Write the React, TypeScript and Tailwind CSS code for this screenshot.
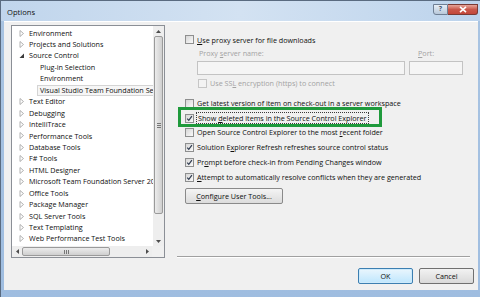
import React from 'react';

const treeItems: { label: string; level: 0 | 1; state?: 'open' | 'closed' | 'leaf'; selected?: boolean }[] = [
  { label: 'Environment', level: 0, state: 'closed' },
  { label: 'Projects and Solutions', level: 0, state: 'closed' },
  { label: 'Source Control', level: 0, state: 'open' },
  { label: 'Plug-in Selection', level: 1, state: 'leaf' },
  { label: 'Environment', level: 1, state: 'leaf' },
  { label: 'Visual Studio Team Foundation Server', level: 1, state: 'leaf', selected: true },
  { label: 'Text Editor', level: 0, state: 'closed' },
  { label: 'Debugging', level: 0, state: 'closed' },
  { label: 'IntelliTrace', level: 0, state: 'closed' },
  { label: 'Performance Tools', level: 0, state: 'closed' },
  { label: 'Database Tools', level: 0, state: 'closed' },
  { label: 'F# Tools', level: 0, state: 'closed' },
  { label: 'HTML Designer', level: 0, state: 'closed' },
  { label: 'Microsoft Team Foundation Server 2010 Power Tools', level: 0, state: 'closed' },
  { label: 'Office Tools', level: 0, state: 'closed' },
  { label: 'Package Manager', level: 0, state: 'closed' },
  { label: 'SQL Server Tools', level: 0, state: 'closed' },
  { label: 'Text Templating', level: 0, state: 'closed' },
  { label: 'Web Performance Test Tools', level: 0, state: 'closed' },
];

const Checkbox = ({ checked, disabled }: { checked?: boolean; disabled?: boolean }) => (
  <span
    className={
      disabled
        ? 'flex h-[9px] w-[9px] shrink-0 items-center justify-center border border-[#c6c6c6] bg-[#f3f3f3]'
        : 'flex h-[9px] w-[9px] shrink-0 items-center justify-center border border-[#8e8f8f] bg-gradient-to-br from-[#d6d6d6] to-[#fafafa]'
    }
  >
    {checked && (
      <svg width="7" height="7" viewBox="0 0 7 7">
        <path d="M1.2 3.6 L2.8 5.3 L5.9 1.2" fill="none" stroke="#2f3b4f" strokeWidth="1.2" />
      </svg>
    )}
  </span>
);

const Arrow = ({ state }: { state?: string }) => {
  if (state === 'open')
    return (
      <svg width="6" height="6" viewBox="0 0 6 6" className="shrink-0">
        <polygon points="5,0.5 5,5 0.5,5" fill="#3a3a3a" />
      </svg>
    );
  if (state === 'closed')
    return (
      <svg width="6" height="7" viewBox="0 0 6 7" className="shrink-0">
        <polygon points="1,0.5 4.5,3.5 1,6.5" fill="#fff" stroke="#a9a9a9" strokeWidth="0.9" />
      </svg>
    );
  return <span className="w-[6px] shrink-0" />;
};

const CheckRow = ({
  checked,
  children,
}: {
  checked?: boolean;
  children: React.ReactNode;
}) => (
  <div className="flex h-[14.75px] items-center gap-[3px] pl-[8px] whitespace-nowrap">
    <Checkbox checked={checked} />
    <span>{children}</span>
  </div>
);

const Tree = () => (
  <div className="relative flex h-[233px] w-[154px] shrink-0 flex-col border border-[#8b8f96] bg-white">
    <div className="flex flex-1 overflow-hidden">
      <div className="flex-1 overflow-hidden pt-[1.3px]">
        {treeItems.map((item, i) => (
          <div
            key={i}
            className="flex h-[11.45px] items-center whitespace-nowrap"
            style={{ paddingLeft: item.level === 0 ? 7 : 24 }}
          >
            {item.level === 0 && <Arrow state={item.state} />}
            <span
              className={
                item.selected
                  ? 'ml-[1px] flex h-[11px] w-[140px] items-center border border-[#d4d4d4] bg-[#f6f6f6] pl-[2px]'
                  : item.level === 0
                    ? 'ml-[3px] pl-[1px]'
                    : 'ml-[1px] pl-[3px]'
              }
            >
              {item.label}
            </span>
          </div>
        ))}
      </div>
      {/* vertical scrollbar */}
      <div className="flex w-[11px] shrink-0 flex-col bg-[#eeeeee]">
        <div className="flex h-[10px] items-center justify-center">
          <svg width="5" height="3" viewBox="0 0 5 3">
            <polygon points="0,3 2.5,0 5,3" fill="#4d4d4d" />
          </svg>
        </div>
        <div className="mx-[1px] flex h-[178px] items-center justify-center rounded-[2px] border border-[#9a9a9a] bg-gradient-to-r from-[#ececec] to-[#cfcfcf]">
          <div className="flex flex-col gap-[1px]">
            <span className="h-px w-[4px] bg-[#777]" />
            <span className="h-px w-[4px] bg-[#777]" />
            <span className="h-px w-[4px] bg-[#777]" />
          </div>
        </div>
        <div className="flex-1" />
        <div className="flex h-[10px] items-center justify-center">
          <svg width="5" height="3" viewBox="0 0 5 3">
            <polygon points="0,0 2.5,3 5,0" fill="#4d4d4d" />
          </svg>
        </div>
      </div>
    </div>
    {/* horizontal scrollbar */}
    <div className="flex h-[11px] shrink-0 bg-[#eeeeee]">
      <div className="flex w-[10px] items-center justify-center">
        <svg width="3" height="5" viewBox="0 0 3 5">
          <polygon points="3,0 0,2.5 3,5" fill="#4d4d4d" />
        </svg>
      </div>
      <div className="my-[1px] flex w-[88px] items-center justify-center rounded-[2px] border border-[#9a9a9a] bg-gradient-to-b from-[#ececec] to-[#cfcfcf]">
        <div className="flex gap-[1px]">
          <span className="h-[4px] w-px bg-[#777]" />
          <span className="h-[4px] w-px bg-[#777]" />
          <span className="h-[4px] w-px bg-[#777]" />
        </div>
      </div>
      <div className="flex-1" />
      <div className="flex w-[10px] items-center justify-center">
        <svg width="3" height="5" viewBox="0 0 3 5">
          <polygon points="0,0 3,2.5 0,5" fill="#4d4d4d" />
        </svg>
      </div>
      <div className="w-[12px] bg-[#f0f0f0]" />
    </div>
  </div>
);

const OptionsPanel = () => (
  <div className="flex flex-1 flex-col">
    <div className="mt-[7.6px]">
      <CheckRow>
        <u>U</u>se proxy server for file downloads
      </CheckRow>
    </div>
    <div className="flex h-[12px] items-center pl-[22px] text-[#a3a3a3]">
      <span className="flex-1">
        Proxy <u>s</u>erver name:
      </span>
      <span className="w-[60px]">
        <u>P</u>ort:
      </span>
    </div>
    <div className="mt-[2px] flex h-[14px] gap-[4px] pl-[20px]">
      <div className="w-[208px] border border-[#c3c3c3] bg-[#f5f5f5]" />
      <div className="w-[54px] border border-[#c3c3c3] bg-[#f5f5f5]" />
    </div>
    <div className="mt-[0.6px] flex h-[14.75px] items-center gap-[3px] pl-[21px] whitespace-nowrap text-[#a3a3a3]">
      <Checkbox disabled />
      <span>
        Use SS<u>L</u> encryption (https) to connect
      </span>
    </div>
    <div className="mt-[5.2px]">
      <CheckRow>
        Get latest version of item on check-out in a server workspace
      </CheckRow>
      <div className="relative">
        <div className="flex h-[14.75px] items-center gap-[2px] pl-[8px] whitespace-nowrap">
          <Checkbox checked />
          <span className="border border-dotted border-[#3a3a3a] px-[1px] leading-[10px]">
            Show <u>d</u>eleted items in the Source Control Explorer
          </span>
        </div>
        <div className="pointer-events-none absolute top-[-3.6px] left-[1px] h-[20px] w-[204px] border-[3px] border-[#1f9a3c]" />
      </div>
      <CheckRow>
        Open Source Control Explorer to the most <u>r</u>ecent folder
      </CheckRow>
      <CheckRow checked>
        Solution E<u>x</u>plorer Refresh refreshes source control status
      </CheckRow>
      <CheckRow checked>
        Pr<u>o</u>mpt before check-in from Pending Changes window
      </CheckRow>
      <CheckRow checked>
        <u>A</u>ttempt to automatically resolve conflicts when they are generated
      </CheckRow>
    </div>
    <button className="mt-[3.6px] ml-[8px] flex h-[16px] w-[98px] items-center justify-center rounded-[2px] border border-[#8a8a8a] bg-gradient-to-b from-[#f4f4f4] to-[#dcdcdc]">
      <span>
        <u>C</u>onfigure User Tools...
      </span>
    </button>
    <div className="mt-auto mr-[8px] mb-[1px] h-[2px] border-t border-b border-t-[#a0a0a0] border-b-white" />
  </div>
);

export default function App() {
  return (
    <div className="flex h-[297px] w-[480px] flex-col overflow-hidden border-t border-l border-[#5a6b80] bg-gradient-to-b from-[#a9c4e2] to-[#9fbde0] font-['Open_Sans',sans-serif] text-[7.2px] text-[#0f0f0f]">
      {/* title bar */}
      <div className="flex h-[20px] shrink-0 items-start bg-gradient-to-r from-[#c0d5ec] via-[#d3e2f2] to-[#bcd3ec]">
        <span className="mt-[6px] ml-[6px] text-[7.6px] text-[#111]">Options</span>
        <div className="flex-1" />
        <div className="mt-[3px] mr-[2px] flex h-[11px]">
          <div className="flex w-[15px] items-center justify-center rounded-bl-[3px] border border-[#6f7f94] bg-gradient-to-b from-[#e6eef7] to-[#b8c8da] text-[7px] font-bold text-[#4a5a70]">
            ?
          </div>
          <div className="flex w-[30px] items-center justify-center rounded-br-[3px] border border-l-0 border-[#7a3a34] bg-gradient-to-b from-[#e6a59a] via-[#c9574a] to-[#c2473a]">
            <svg width="8" height="7" viewBox="0 0 8 7">
              <path d="M1 0.8 L7 6.2 M7 0.8 L1 6.2" stroke="#fff" strokeWidth="1.6" />
            </svg>
          </div>
        </div>
      </div>
      {/* body */}
      <div className="mr-[2px] mb-[7px] ml-[3px] flex flex-1 flex-col border-t border-white bg-[#f0f0f0]">
        <div className="flex h-[237px] shrink-0 pt-[3px]">
          <div className="ml-[7px]">
            <Tree />
          </div>
          <div className="ml-[12px] flex flex-1">
            <OptionsPanel />
          </div>
        </div>
        <div className="mt-[9px] flex justify-end gap-[6px] pr-[4px]">
          <button className="flex h-[16px] w-[55px] items-center justify-center rounded-[2px] border border-[#3c7fb1] bg-gradient-to-b from-[#eaf6fd] to-[#bee6fd] shadow-[inset_0_0_0_1px_#cdeafb]">
            OK
          </button>
          <button className="flex h-[16px] w-[55px] items-center justify-center rounded-[2px] border border-[#707070] bg-gradient-to-b from-[#f2f2f2] to-[#d9d9d9]">
            Cancel
          </button>
        </div>
      </div>
    </div>
  );
}
